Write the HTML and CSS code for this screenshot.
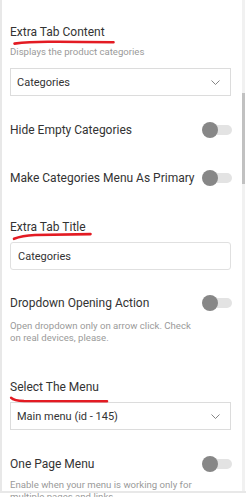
FILE: index.html
```html
<!DOCTYPE html>
<html>
<head>
<meta charset="utf-8">
<link rel="stylesheet" href="styles.css">
</head>
<body>
<div class="panel">
  <div class="field field-first">
    <div class="title">Extra Tab Content
      <svg class="mark mark-content" width="110" height="8" viewBox="0 0 110 8"><path d="M4.5,5.6 Q18,4 38,3.8 T103.5,4.3"/></svg>
    </div>
    <div class="desc desc-under-title">Displays the product categories</div>
    <div class="select select-after-desc"><span>Categories</span>
      <svg class="chev" width="9" height="5" viewBox="0 0 9 5"><path d="M0.5,0.5 L4.5,4.5 L8.5,0.5"/></svg>
    </div>
  </div>

  <div class="row gap-26">
    <span class="label">Hide Empty Categories</span>
    <span class="toggle"><span class="knob"></span><span class="track"></span></span>
  </div>

  <div class="row gap-32">
    <span class="label">Make Categories Menu As Primary</span>
    <span class="toggle"><span class="knob"></span><span class="track"></span></span>
  </div>

  <div class="field gap-33">
    <div class="title">Extra Tab Title
      <svg class="mark mark-tabtitle" width="90" height="11" viewBox="0 0 90 11"><path d="M4,7.8 Q12,4.6 25,4 L80.5,3.1"/></svg>
    </div>
    <div class="input"><span>Categories</span></div>
  </div>

  <div class="row gap-25">
    <span class="label">Dropdown Opening Action</span>
    <span class="toggle"><span class="knob"></span><span class="track"></span></span>
  </div>
  <div class="desc desc-under-row">Open dropdown only on arrow click. Check on real devices, please.</div>

  <div class="field gap-35">
    <div class="title">Select The Menu
      <svg class="mark mark-menu" width="105" height="8" viewBox="0 0 105 8"><path d="M1.2,1.8 Q4,4.7 14,5 L97,5.3"/></svg>
    </div>
    <div class="select"><span>Main menu (id - 145)</span>
      <svg class="chev" width="9" height="5" viewBox="0 0 9 5"><path d="M0.5,0.5 L4.5,4.5 L8.5,0.5"/></svg>
    </div>
  </div>

  <div class="row gap-26">
    <span class="label">One Page Menu</span>
    <span class="toggle"><span class="knob"></span><span class="track"></span></span>
  </div>
  <div class="desc desc-under-row-tight">Enable when your menu is working only for multiple pages and links.</div>

  <div class="scrollbar"><div class="thumb"></div></div>
</div>
</body>
</html>
```

FILE: styles.css
```css
html, body {
  margin: 0;
  padding: 0;
}
body {
  width: 246px;
  height: 497px;
  overflow: hidden;
  background: #fff;
  font-family: Roboto, "Liberation Sans", sans-serif;
  color: #333;
}
.panel {
  position: relative;
  box-sizing: border-box;
  width: 246px;
  height: 493px;
  border-left: 2px solid #e8e8e8;
  border-bottom: 2px solid #e8e8e8;
  padding: 24px 14px 0 8px;
}
.title {
  position: relative;
  font-size: 12px;
  line-height: 16px;
  color: #333;
}
.mark {
  position: absolute;
  left: 0;
  overflow: visible;
  z-index: 2;
}
.mark path {
  fill: none;
  stroke: #e31b23;
  stroke-width: 2.6;
  stroke-linecap: round;
  stroke-linejoin: round;
}
.mark-content { top: 14px; }
.mark-tabtitle { top: 12px; }
.mark-menu { top: 17px; }

.desc {
  font-size: 9.6px;
  line-height: 12px;
  color: #9a9a9a;
  max-width: 185px;
}
.desc-under-title { margin-top: 6px; }
.desc-under-row { margin-top: 9px; }
.desc-under-row-tight { margin-top: 7px; }

.select, .input {
  box-sizing: border-box;
  height: 28px;
  width: 221px;
  display: flex;
  align-items: center;
  font-size: 11px;
  color: #333;
  background: #fff;
}
.select {
  border: 1px solid #dcdcdc;
  padding: 0 10px 0 6px;
  justify-content: space-between;
  margin-top: 7px;
}
.select-after-desc { margin-top: 10px; }
.input {
  border: 1px solid #e0e0e0;
  border-radius: 3px;
  padding: 0 7px;
  margin-top: 7px;
}
.chev path {
  fill: none;
  stroke: #777;
  stroke-width: 0.9;
}

.row {
  display: flex;
  justify-content: space-between;
  align-items: center;
  height: 16px;
}
.label {
  font-size: 12px;
  line-height: 16px;
  color: #333;
  white-space: nowrap;
}
.toggle {
  display: flex;
  align-items: center;
  width: 30px;
}
.knob {
  position: relative;
  z-index: 1;
  width: 16px;
  height: 16px;
  border-radius: 50%;
  background: #878787;
}
.track {
  width: 20px;
  height: 10px;
  margin-left: -6px;
  border-radius: 5px;
  background: #e3e3e3;
}

.gap-25 { margin-top: 25px; }
.gap-26 { margin-top: 26px; }
.gap-32 { margin-top: 32px; }
.gap-33 { margin-top: 33px; }
.gap-35 { margin-top: 35px; }

.scrollbar {
  position: absolute;
  left: 240px;
  top: 0;
  width: 3px;
  height: 491px;
  background: #f1f1f1;
}
.thumb {
  margin-top: 93px;
  height: 91px;
  background: #c1c1c1;
}
```
